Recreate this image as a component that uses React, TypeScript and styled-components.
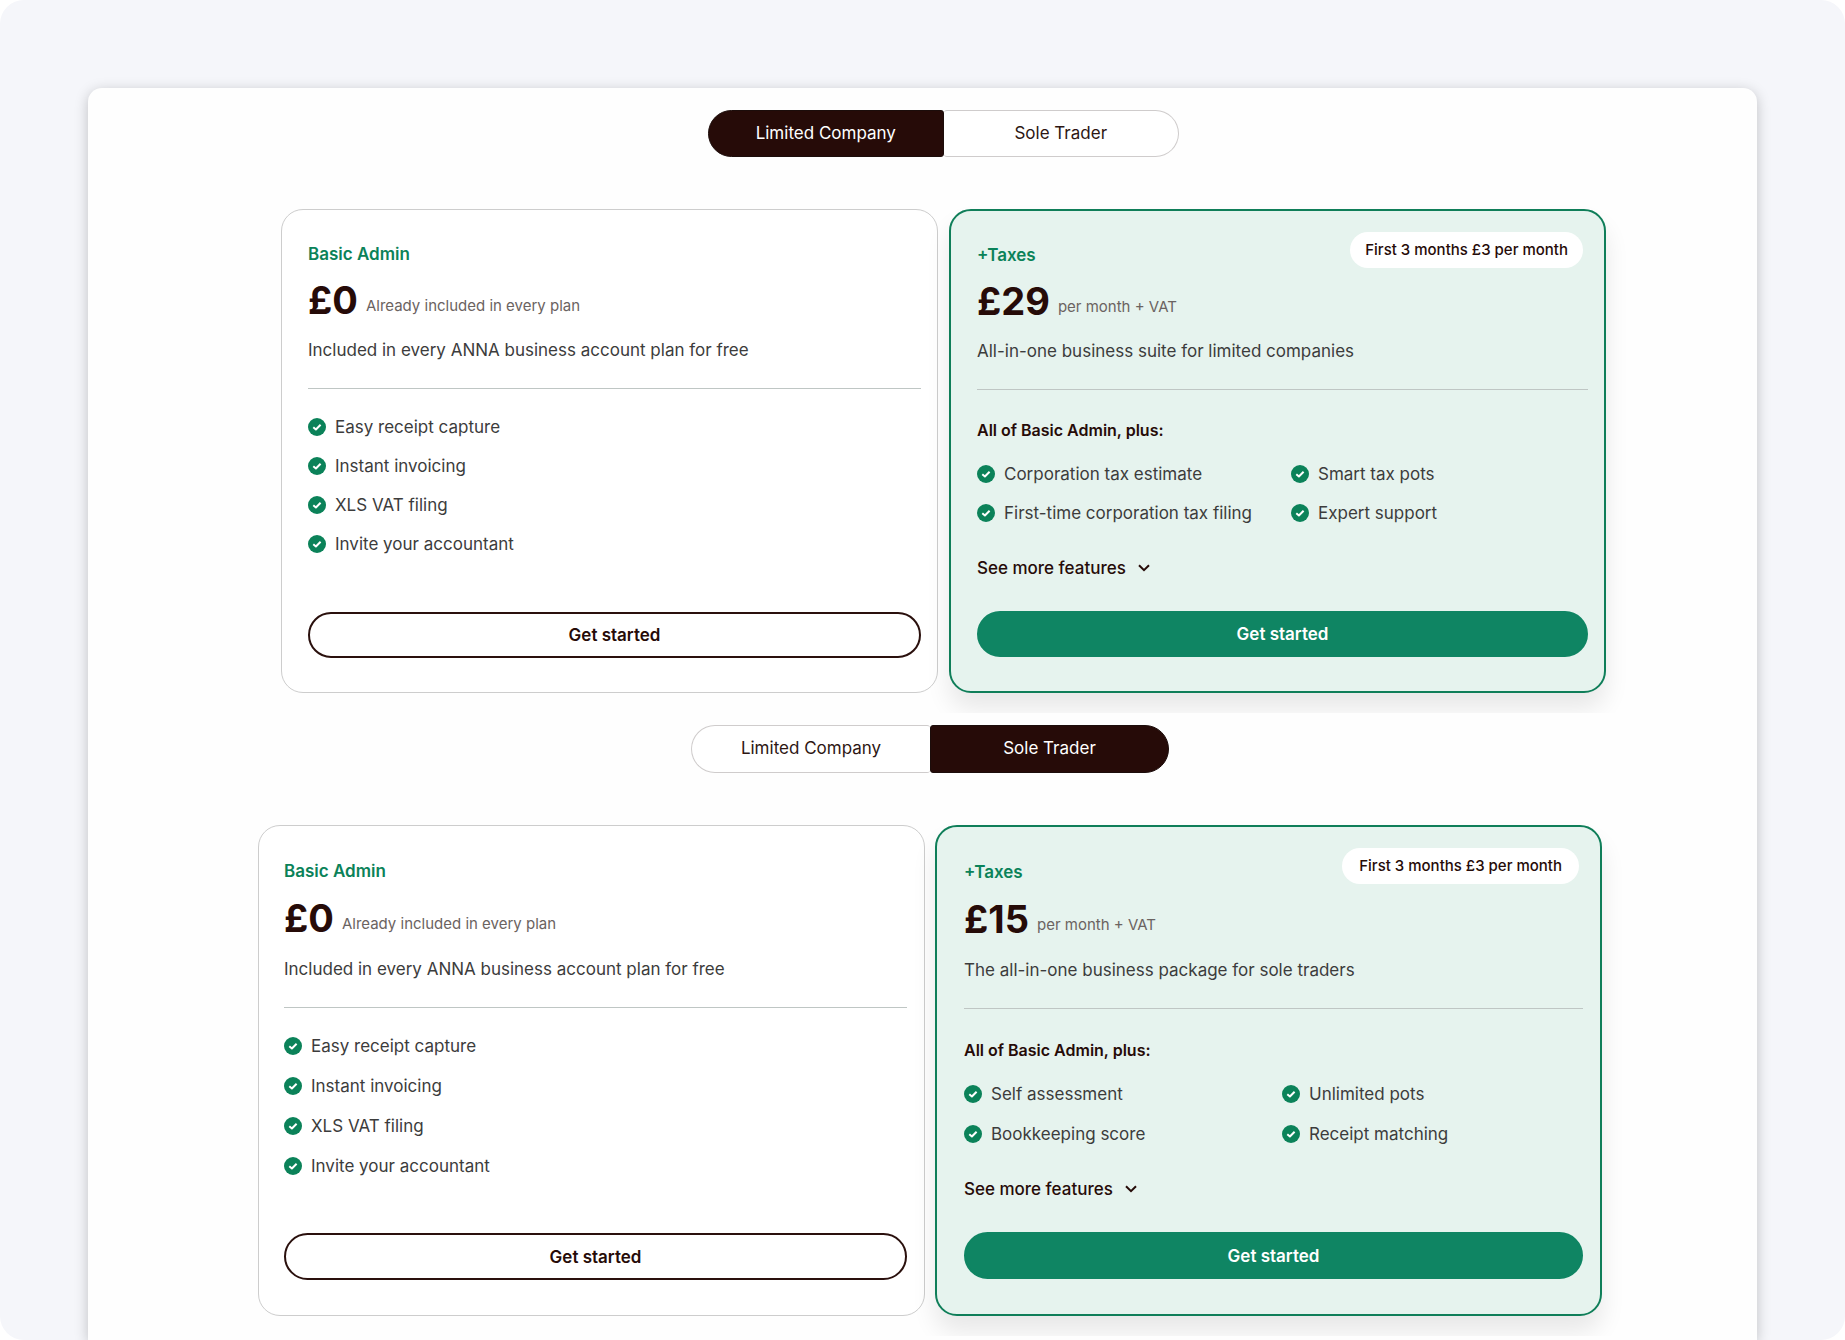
import React, { useState } from "react";
import styled, { createGlobalStyle, css, ThemeProvider } from "styled-components";

const GlobalStyle = createGlobalStyle`
  *, *::before, *::after { box-sizing: border-box; }
  body {
    margin: 0;
    background: #fff;
    font-family: Inter, "Liberation Sans", Arial, sans-serif;
    color: #260b08;
  }
  h2, h3, p, ul { margin: 0; padding: 0; }
  ul { list-style: none; }
  button { font-family: inherit; cursor: pointer; }
`;

const regular = {
  inset: "0 151px 0 193px",
  top: 22,
  tabs: 471,
  tabHeight: 47,
  cardGap: 11,
  cardPad: "32px 16px 34px 26px",
  cardPadFeatured: "32px 16px 34px 26px",
  badgePad: 15,
  button: 46,
  priceGap: 12,
  textGap: 16,
  rowGap: 15,
  headingGap: 28,
};

const roomy = {
  ...regular,
  inset: "0 155px 0 170px",
  top: 12,
  tabs: 478,
  tabHeight: 48,
  cardGap: 10,
  cardPad: "33px 17px 35px 25px",
  cardPadFeatured: "33px 17px 35px 27px",
  badgePad: 17,
  button: 47,
  priceGap: 13,
  textGap: 17,
  rowGap: 16,
  headingGap: 29,
};

type Size = typeof regular;

const Page = styled.main`
  display: flex;
  min-height: 100vh;
  padding: 88px 88px 0;
  border-radius: 24px;
  background: #f5f6fa;
  overflow: hidden;
`;

const Panel = styled.div`
  flex: 1;
  min-width: 0;
  background: #fefefe;
  border-radius: 14px 14px 0 0;
  box-shadow: 0 3px 14px rgba(0, 0, 0, 0.22);
`;

const Section = styled.section<{ $size: Size }>`
  display: flex;
  flex-direction: column;
  align-items: center;
  gap: 52px;
  padding: ${(p) => p.$size.inset};
  padding-top: ${(p) => p.$size.top}px;
  padding-bottom: 20px;
  overflow: clip;
`;

const Tabs = styled.div<{ $size: Size }>`
  display: grid;
  grid-template-columns: 1fr 1fr;
  width: ${(p) => p.$size.tabs}px;
  max-width: 100%;
  height: ${(p) => p.$size.tabHeight}px;
`;

const Tab = styled.button<{ $active: boolean }>`
  padding: 0 0 2px;
  border: 1px solid #cfcccc;
  background: #fff;
  color: #2d1613;
  font-size: 17px;
  font-weight: 400;
  line-height: 24px;
  &:first-child { border-radius: 24px 3px 3px 24px; }
  &:last-child { border-radius: 3px 24px 24px 3px; }
  &:first-child:not([aria-pressed="true"]) { border-right: 0; }
  &:last-child:not([aria-pressed="true"]) { border-left: 0; }
  ${(p) =>
    p.$active &&
    css`
      border-color: #1c0d0b;
      background: #260b08;
      color: #fff;
    `}
`;

const Cards = styled.div<{ $size: Size }>`
  display: grid;
  grid-template-columns: 1fr 1fr;
  gap: ${(p) => p.$size.cardGap}px;
  width: 100%;
`;

const Card = styled.article<{ $featured?: boolean }>`
  position: relative;
  display: flex;
  flex-direction: column;
  min-width: 0;
  padding: ${(p) => (p.$featured ? p.theme.cardPadFeatured : p.theme.cardPad)};
  border: 1px solid #cdcdcd;
  border-radius: 22px;
  background: #fff;
  ${(p) =>
    p.$featured &&
    css`
      border: 2px solid #0f7e59;
      background: #e6f3ee;
      box-shadow: 0 16px 24px rgba(0, 0, 0, 0.09);
    `}
`;

const Name = styled.h2`
  color: #0b8259;
  font-size: 17px;
  font-weight: 600;
  line-height: 24px;
`;

const PriceRow = styled.div`
  display: flex;
  align-items: flex-end;
  gap: 8px;
  margin-top: ${(p) => p.theme.priceGap}px;
`;

const Price = styled.strong`
  font-size: 38px;
  font-weight: 700;
  line-height: 44px;
`;

const PriceNote = styled.span`
  padding-bottom: 6px;
  color: #6b6361;
  font-size: 15px;
  line-height: 20px;
`;

const Description = styled.p`
  margin-top: ${(p) => p.theme.textGap}px;
  color: #3c3c3c;
  font-size: 17px;
  line-height: 24px;
`;

const Rule = styled.hr`
  width: 100%;
  height: 1px;
  margin: 26px 0 0;
  border: 0;
  background: #bfc6c4;
`;

const Heading = styled.h3`
  margin-top: ${(p) => p.theme.headingGap}px;
  font-size: 16px;
  font-weight: 600;
  line-height: 24px;
`;

const Features = styled.ul<{ $columns: number }>`
  display: grid;
  grid-template-columns: repeat(${(p) => p.$columns}, 1fr);
  gap: ${(p) => p.theme.rowGap}px 17px;
  margin-top: ${(p) => (p.$columns > 1 ? 20 : 26)}px;
`;

const Feature = styled.li`
  display: flex;
  align-items: center;
  gap: 9px;
  color: #3c3c3c;
  font-size: 17px;
  line-height: 24px;
  white-space: nowrap;
  svg { flex: none; }
`;

const More = styled.button`
  display: flex;
  align-items: center;
  align-self: flex-start;
  gap: 12px;
  margin-top: 31px;
  padding: 0;
  border: 0;
  background: none;
  color: #260b08;
  font-size: 17px;
  font-weight: 500;
  line-height: 24px;
`;

const Foot = styled.div`
  margin-top: auto;
  padding-top: 31px;
`;

const Start = styled.button<{ $solid?: boolean }>`
  display: block;
  width: 100%;
  height: ${(p) => p.theme.button}px;
  padding: 0;
  border: 2px solid ${(p) => (p.$solid ? "#0f8563" : "#2a100d")};
  border-radius: 24px;
  background: ${(p) => (p.$solid ? "#0f8563" : "#fff")};
  color: ${(p) => (p.$solid ? "#fff" : "#260b08")};
  font-size: 17px;
  font-weight: 600;
  line-height: 24px;
`;

const Badge = styled.span`
  position: absolute;
  top: 21px;
  right: 21px;
  padding: 8px ${(p) => p.theme.badgePad}px;
  border-radius: 18px;
  background: #fff;
  font-size: 15px;
  font-weight: 500;
  line-height: 20px;
`;

const Check = () => (
  <svg width="18" height="18" viewBox="0 0 18 18" aria-hidden="true">
    <circle cx="9" cy="9" r="9" fill="#0b8259" />
    <path
      d="M5.3 9.3 7.9 11.5 12.6 6.8"
      fill="none"
      stroke="#fff"
      strokeWidth="2"
      strokeLinejoin="round"
    />
  </svg>
);

const Chevron = () => (
  <svg width="12" height="8" viewBox="0 0 12 8" aria-hidden="true">
    <path d="M1 1.2 6 6.2 11 1.2" fill="none" stroke="#260b08" strokeWidth="2" />
  </svg>
);

const basicFeatures = [
  "Easy receipt capture",
  "Instant invoicing",
  "XLS VAT filing",
  "Invite your accountant",
];

const plans = {
  limited: {
    label: "Limited Company",
    price: "£29",
    description: "All-in-one business suite for limited companies",
    features: [
      "Corporation tax estimate",
      "Smart tax pots",
      "First-time corporation tax filing",
      "Expert support",
    ],
  },
  sole: {
    label: "Sole Trader",
    price: "£15",
    description: "The all-in-one business package for sole traders",
    features: ["Self assessment", "Unlimited pots", "Bookkeeping score", "Receipt matching"],
  },
};

type PlanKey = keyof typeof plans;

function FeatureList({ items, columns = 1 }: { items: string[]; columns?: number }) {
  return (
    <Features $columns={columns}>
      {items.map((item) => (
        <Feature key={item}>
          <Check />
          {item}
        </Feature>
      ))}
    </Features>
  );
}

function Pricing({ initial, size }: { initial: PlanKey; size: Size }) {
  const [active, setActive] = useState<PlanKey>(initial);
  const plan = plans[active];
  return (
    <ThemeProvider theme={size}>
      <Section $size={size}>
        <Tabs $size={size} role="group" aria-label="Business type">
          {(Object.keys(plans) as PlanKey[]).map((key) => (
            <Tab
              key={key}
              type="button"
              $active={key === active}
              aria-pressed={key === active}
              onClick={() => setActive(key)}
            >
              {plans[key].label}
            </Tab>
          ))}
        </Tabs>
        <Cards $size={size}>
          <Card>
            <Name>Basic Admin</Name>
            <PriceRow>
              <Price>£0</Price>
              <PriceNote>Already included in every plan</PriceNote>
            </PriceRow>
            <Description>Included in every ANNA business account plan for free</Description>
            <Rule />
            <FeatureList items={basicFeatures} />
            <Foot>
              <Start type="button">Get started</Start>
            </Foot>
          </Card>
          <Card $featured>
            <Badge>First 3 months £3 per month</Badge>
            <Name>+Taxes</Name>
            <PriceRow>
              <Price>{plan.price}</Price>
              <PriceNote>per month + VAT</PriceNote>
            </PriceRow>
            <Description>{plan.description}</Description>
            <Rule />
            <Heading>All of Basic Admin, plus:</Heading>
            <FeatureList items={plan.features} columns={2} />
            <More type="button">
              See more features
              <Chevron />
            </More>
            <Foot>
              <Start type="button" $solid>
                Get started
              </Start>
            </Foot>
          </Card>
        </Cards>
      </Section>
    </ThemeProvider>
  );
}

export default function App() {
  return (
    <>
      <GlobalStyle />
      <Page>
        <Panel>
          <Pricing initial="limited" size={regular} />
          <Pricing initial="sole" size={roomy} />
        </Panel>
      </Page>
    </>
  );
}
